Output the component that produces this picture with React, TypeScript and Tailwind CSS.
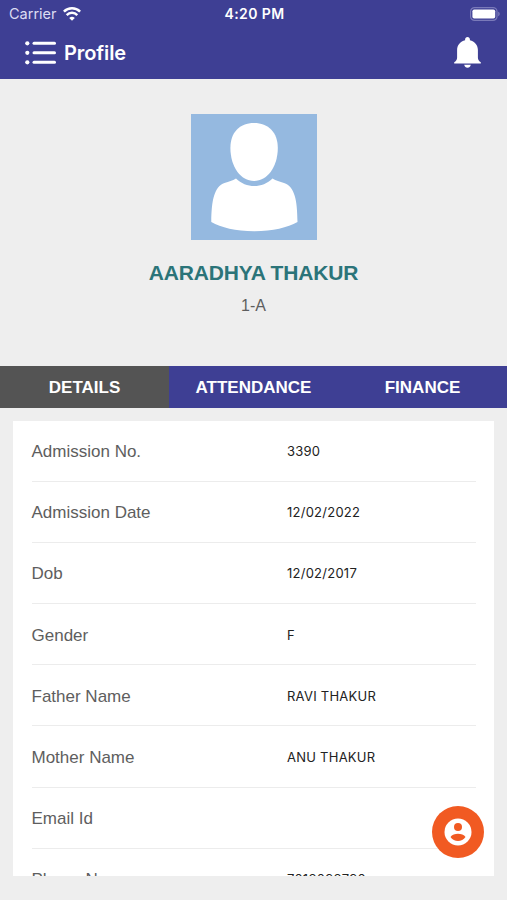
import { useState } from 'react'

const tabs = ['DETAILS', 'ATTENDANCE', 'FINANCE']

const details = [
  { label: 'Admission No.', value: '3390' },
  { label: 'Admission Date', value: '12/02/2022' },
  { label: 'Dob', value: '12/02/2017' },
  { label: 'Gender', value: 'F' },
  { label: 'Father Name', value: 'RAVI THAKUR' },
  { label: 'Mother Name', value: 'ANU THAKUR' },
  { label: 'Email Id', value: '' },
  { label: 'Phone No.', value: '7018098790' },
]

function WifiIcon() {
  return (
    <svg className="h-[14px] w-[18px]" viewBox="0 0 18 14" fill="none" stroke="white" strokeWidth="2.5" aria-hidden="true">
      <path d="M0.9 4.700a11.500 11.500 0 0 1 16.200 0" />
      <path d="M3.700 8.100a7.400 7.400 0 0 1 10.600 0" />
      <path d="M9 13.800 6.200 11a4 4 0 0 1 5.600 0Z" fill="white" stroke="none" />
    </svg>
  )
}

function BatteryIcon() {
  return (
    <svg className="h-[14px] w-[30px]" viewBox="0 0 30 14" aria-hidden="true">
      <rect x="0.6" y="0.6" width="26.400" height="12.800" rx="4" fill="none" stroke="#7a7ab9" strokeWidth="1.200" />
      <rect x="2.400" y="2.400" width="22.800" height="9.200" rx="1.800" fill="white" />
      <path d="M28.200 4.800c2 .5 2 3.900 0 4.400Z" fill="#7a7ab9" />
    </svg>
  )
}

function MenuIcon() {
  return (
    <svg className="h-6 w-[31px]" viewBox="0 0 31 24" fill="white" aria-hidden="true">
      <circle cx="2.300" cy="2.300" r="2.100" />
      <circle cx="2.300" cy="11.800" r="2.100" />
      <circle cx="2.300" cy="21.300" r="2.100" />
      <rect x="7.500" y="0.800" width="23.500" height="3" rx="1.500" />
      <rect x="7.500" y="10.300" width="23.500" height="3" rx="1.500" />
      <rect x="7.500" y="19.800" width="23.500" height="3" rx="1.500" />
    </svg>
  )
}

function BellIcon() {
  return (
    <svg className="h-[31px] w-[27px]" viewBox="0 0 27 31" fill="white" aria-hidden="true">
      <path d="M13.500 0c1.400 0 2.400 1 2.400 2.300v.9c4.600 1.100 8 4.700 8 9.800v7.500c0 2 .6 3.200 2.900 4.800v1.300H.2v-1.300C2.500 23.700 3.100 22.500 3.100 20.500V13c0-5.100 3.400-8.700 8-9.800v-.9C11.100 1 12.100 0 13.500 0Z" />
      <path d="M10.200 27.800h6.600c-.4 1.900-1.600 3-3.300 3s-2.900-1.100-3.300-3Z" />
    </svg>
  )
}

function AccountIcon() {
  return (
    <svg className="h-7 w-7" viewBox="0 0 28 28" fill="#f15a22" aria-hidden="true">
      <circle cx="14" cy="14" r="13.500" fill="white" />
      <circle cx="14" cy="9" r="4" />
      <path d="M6.500 18.900c1.300-2.200 4.700-3.200 7.500-3.200s6.200 1 7.500 3.200c-1.700 2.500-4.600 4.100-7.500 4.100s-5.800-1.600-7.500-4.100Z" />
    </svg>
  )
}

function Avatar() {
  return (
    <svg className="h-[126px] w-[126px] bg-[#95b9e0]" viewBox="0 0 126 126" fill="white" role="img" aria-label="Student photo">
      <path d="M63 9C48.500 9 39.400 18.500 39.400 34c0 19 10.500 33 23.600 33s23.800-14 23.800-33C86.800 18.500 77.500 9 63 9Z" />
      <path d="M45 64.500c10 10 26.500 10 36.500 0 3.500 2.300 7.300 3.100 11.500 4.500 10.800 3.700 13.300 17.300 13.500 39-10 5.500-24.500 9.300-43.200 9.300S30 113.500 20.300 108c.2-21.700 3-35.300 13.200-39 4.500-1.600 8-2.200 11.500-4.500Z" />
    </svg>
  )
}

export default function App() {
  const [activeTab, setActiveTab] = useState('DETAILS')

  return (
    <div className="relative flex h-[900px] w-[507px] flex-col overflow-hidden bg-[#eeeeee] font-['Liberation_Sans',sans-serif]">
      <header className="h-[79px] shrink-0 bg-[#3e3f94] font-[Inter,sans-serif] text-white">
        <div className="grid h-[27px] grid-cols-3 items-center pl-[9px] pr-[7px]">
          <div className="flex items-center gap-[6px]">
            <span className="text-[14.500px] text-[#dcdcf2]">Carrier</span>
            <WifiIcon />
          </div>
          <span className="text-center text-[14px] font-semibold tracking-[0.4px]">4:20 PM</span>
          <div className="flex justify-end">
            <BatteryIcon />
          </div>
        </div>
        <div className="flex h-[51px] items-center justify-between pl-[25px] pr-[26px]">
          <div className="flex items-center gap-2">
            <button aria-label="Menu">
              <MenuIcon />
            </button>
            <h1 className="text-[20px] font-semibold tracking-[-0.1px]">Profile</h1>
          </div>
          <button aria-label="Notifications">
            <BellIcon />
          </button>
        </div>
      </header>

      <section className="flex h-[287px] shrink-0 flex-col items-center pt-[35px]">
        <Avatar />
        <h2 className="mt-[19px] text-[21px] leading-[28px] font-bold tracking-[-0.15px] text-[#2b7479]">AARADHYA THAKUR</h2>
        <p className="mt-2 text-[16px] leading-[22px] text-[#5e5e5e]">1-A</p>
      </section>

      <nav className="grid h-[42px] shrink-0 grid-cols-3">
        {tabs.map((tab) => (
          <button
            key={tab}
            onClick={() => setActiveTab(tab)}
            className={`pt-0.5 text-[17px] font-bold text-white ${activeTab === tab ? 'bg-[#545454]' : 'bg-[#3e3f94]'}`}
          >
            {tab}
          </button>
        ))}
      </nav>

      <main className="mx-[13px] mt-[13px] h-[455px] shrink-0 overflow-hidden bg-white pr-[18px] pl-[18.500px]">
        {details.map((item) => (
          <div key={item.label} className="flex h-[61.100px] items-center border-b border-[#ececec] pt-[2px]">
            <span className="w-[255.500px] text-[17px] text-[#5e5e5e]">{item.label}</span>
            <span className="font-[Inter,sans-serif] text-[13px] tracking-[0.250px] text-[#222222]">{item.value}</span>
          </div>
        ))}
      </main>

      <button
        className="absolute right-[23px] bottom-[42px] flex h-[52px] w-[52px] items-center justify-center rounded-full bg-[#f15a22]"
        aria-label="Account"
      >
        <AccountIcon />
      </button>
    </div>
  )
}
